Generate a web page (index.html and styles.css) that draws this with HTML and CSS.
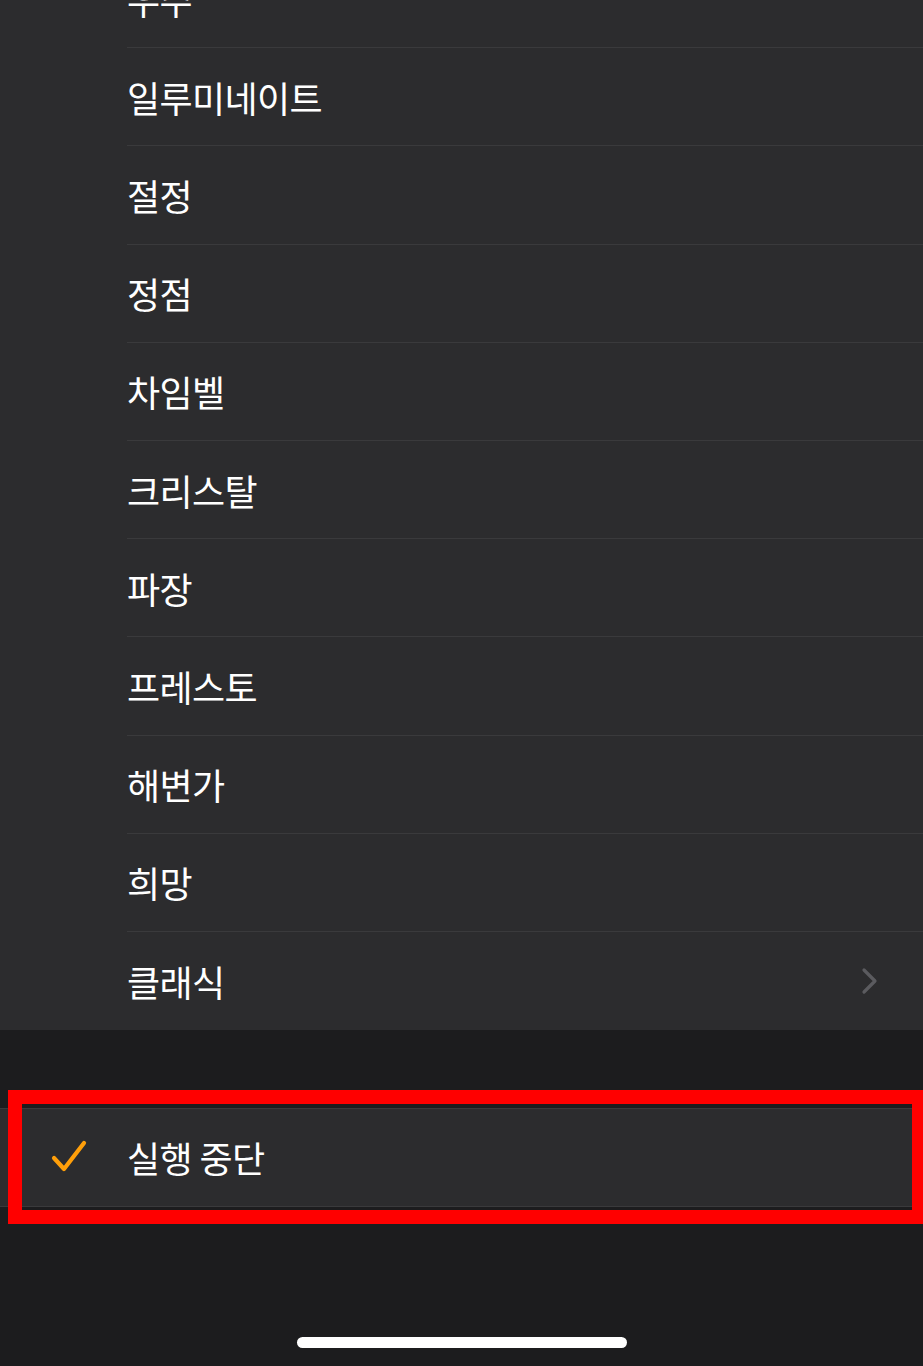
FILE: index.html
```html
<!DOCTYPE html>
<html>
  <head>
    <meta charset="utf-8">
    <link rel="stylesheet" href="styles.css">
  </head>
  <body>
    <div class="screen">
      <div class="sound-list">
        <div class="row"><span class="label">우주</span></div>
        <div class="row"><span class="label">일루미네이트</span></div>
        <div class="row"><span class="label">절정</span></div>
        <div class="row"><span class="label">정점</span></div>
        <div class="row"><span class="label">차임벨</span></div>
        <div class="row"><span class="label">크리스탈</span></div>
        <div class="row"><span class="label">파장</span></div>
        <div class="row"><span class="label">프레스토</span></div>
        <div class="row"><span class="label">해변가</span></div>
        <div class="row"><span class="label">희망</span></div>
        <div class="row last">
          <span class="label">클래식</span>
          <svg class="chevron" width="18" height="28" viewBox="0 0 18 28">
            <path d="M3 3 L14 14 L3 25" fill="none" stroke="#5b5b5f" stroke-width="3.2" stroke-linecap="round" stroke-linejoin="round"/>
          </svg>
        </div>
      </div>

      <div class="none-group">
        <div class="none-row">
          <svg class="check" width="40" height="36" viewBox="0 0 40 36">
            <path d="M4 19 L14 30 L34 4" fill="none" stroke="#ff9f0a" stroke-width="4.2" stroke-linecap="round" stroke-linejoin="round"/>
          </svg>
          <span class="label">실행 중단</span>
        </div>
        <div class="highlight"></div>
      </div>

      <div class="home-bar"></div>
    </div>
  </body>
</html>
```

FILE: styles.css
```css
html, body {
  margin: 0;
  padding: 0;
}
body {
  background: #1c1c1e;
  color: #ffffff;
  font-family: "Noto Sans CJK KR", "Noto Sans", sans-serif;
  width: 923px;
  height: 1366px;
  overflow: hidden;
}
.screen {
  position: relative;
  height: 1366px;
  display: flex;
  flex-direction: column;
}
.sound-list {
  background: #2c2c2e;
  margin-top: -50px;
}
.row {
  margin-left: 127px;
  height: 97.2px;
  border-bottom: 1px solid #3a3a3c;
  display: flex;
  align-items: center;
  padding-right: 44px;
}
.row.last {
  border-bottom: none;
  height: 98px;
}
.label {
  font-size: 36px;
  letter-spacing: -0.6px;
  line-height: 1;
  flex: 1;
}
.chevron {
  display: block;
}
.none-group {
  position: relative;
  margin-top: 78px;
}
.none-row {
  background: #2c2c2e;
  border-top: 1px solid #3a3a3c;
  border-bottom: 1px solid #3a3a3c;
  height: 97px;
  display: flex;
  align-items: center;
}
.check {
  display: block;
  margin-left: 50px;
  margin-right: 37px;
}
.highlight {
  position: absolute;
  left: 8px;
  top: -18px;
  right: -3px;
  height: 106px;
  border: 14px solid #ff0000;
}
.home-bar {
  margin: auto auto 18px;
  width: 330px;
  height: 11px;
  border-radius: 6px;
  background: #ffffff;
}
```
